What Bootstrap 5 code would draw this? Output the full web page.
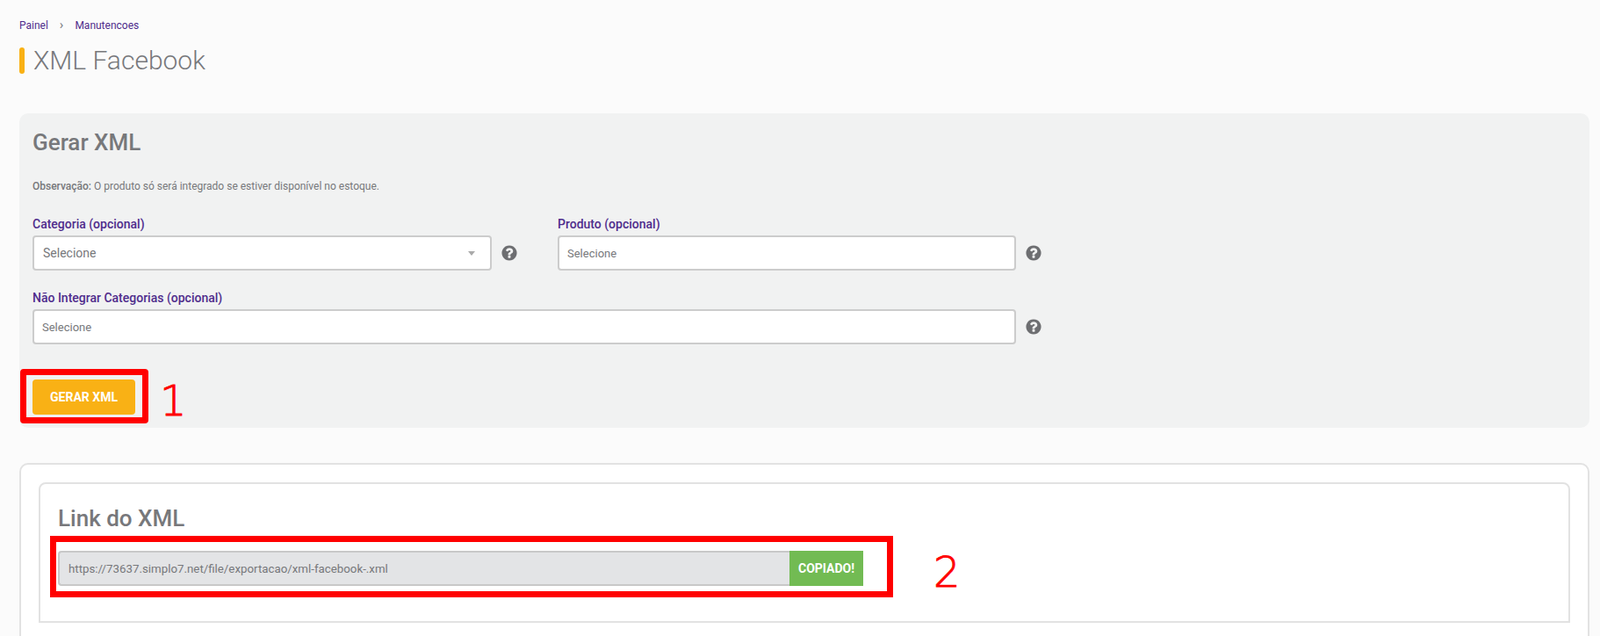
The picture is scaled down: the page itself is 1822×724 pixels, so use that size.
<!DOCTYPE html>
<html lang="pt-BR">
<head>
<meta charset="utf-8">
<title>XML Facebook</title>
<link rel="stylesheet" href="https://cdn.jsdelivr.net/npm/bootstrap@5.3.0/dist/css/bootstrap.min.css">
<style>
html,body{height:724px;overflow:hidden}
body{background:#fbfbfb;font-family:Roboto,"Liberation Sans",sans-serif;color:#77787b}
.page-wrap{padding:0 12px 0 22px}
.crumbs{--bs-breadcrumb-divider:'›';--bs-breadcrumb-margin-bottom:0;--bs-breadcrumb-item-padding-x:13px;font-size:12px;line-height:18px;padding-top:20px}
.crumbs .breadcrumb-item::before{color:#77787b;font-size:15px;line-height:16px}
.crumbs a{color:#4f2c8c;text-decoration:none}
.title-row{margin-top:16px;height:30px}
.title-mark{width:6px;height:30px;border-radius:3px;background:#f9b115;margin-right:10px}
.page-title{font-size:30px;font-weight:300;line-height:30px;margin:0;color:#77787b}
.gen-panel{background:#f1f2f2;border-radius:10px;margin-top:45px;height:358px;padding:18px 15px}
.sec-title{font-size:26px;font-weight:500;line-height:30px;margin:0;color:#77787b}
.obs-note{font-size:12px;line-height:14px;margin:28px 0 0}
.obs-note strong{font-weight:500}
.fields{margin-top:28px;width:1198px}
.fld{width:598px}
.fld-wide{width:1198px;margin-top:23px}
.fld-label{display:block;font-size:14px;font-weight:500;line-height:16px;margin:0 0 5px;color:#4f2c8c}
.fld-line{display:flex;align-items:center}
.fld-box{height:40px;border:2px solid #ccc;border-radius:4px;background-color:#fff;color:#77787b;box-shadow:none}
.fld-box.form-control{font-size:13px;padding:0 9px;width:522px}
.fld-box.form-control::placeholder{color:#77787b;opacity:1}
.fld-wide .fld-box.form-control{width:1120px}
.fld-box.form-select{font-size:14px;padding:0 10px;width:523px;background-size:8px 5px;background-position:right 17px center;background-image:url("data:image/svg+xml,%3Csvg xmlns='http://www.w3.org/2000/svg' viewBox='0 0 8 5'%3E%3Cpath d='M0 0h8L4 5z' fill='%23aaa'/%3E%3C/svg%3E")}
.help-ico{width:20px;height:20px;fill:#6d6e71;flex:none;margin-left:10px}
.gen-btn{background:#f9b115;border:0;color:#fff;font-size:14px;font-weight:700;width:117px;height:40px;border-radius:4px;margin-top:40px;padding:0;text-transform:uppercase}
.gen-wrap{position:relative;width:117px}
.red-frame{position:absolute;border:7px solid #f00;border-radius:4px;pointer-events:none}
.red-num{position:absolute;color:#f00;font-family:"DejaVu Sans",sans-serif;font-weight:200;font-size:48px;line-height:48px;-webkit-text-stroke:.9px #f00}
.frame-one{left:-14px;top:28px;width:146px;height:62px}
.num-one{left:145px;top:40px}
.result-card{background:#fff;border:2px solid #e2e2e2;border-radius:10px 10px 0 0;margin-top:40px;padding:20px 20px 0;height:260px}
.inner-card{border:2px solid #e2e2e2;border-radius:8px 8px 0 0;height:160px;padding:24px 20px 0;position:relative}
.copy-group{margin-top:22px;width:917px;position:relative}
.copy-group .form-control{height:40px;border:2px solid #c8c8c8;border-right:0;border-radius:4px 0 0 4px;background:#e3e4e6;color:#77787b;font-size:13.3px;padding:0 10px;box-shadow:none}
.copy-btn{background:#72bb53;border:0;color:#fff;font-size:14px;font-weight:700;width:84px;height:40px;padding:0;border-radius:0 4px 4px 0;text-transform:uppercase}
.frame-two{left:-8px;top:-17px;width:960px;height:70px}
.num-two{left:998px;top:0}
</style>
</head>
<body>
<main class="page-wrap">
  <nav aria-label="breadcrumb">
    <ol class="breadcrumb crumbs">
      <li class="breadcrumb-item"><a href="#">Painel</a></li>
      <li class="breadcrumb-item"><a href="#">Manutencoes</a></li>
    </ol>
  </nav>
  <div class="d-flex align-items-center title-row">
    <span class="title-mark"></span>
    <h1 class="page-title">XML Facebook</h1>
  </div>

  <section class="gen-panel">
    <h2 class="sec-title">Gerar XML</h2>
    <p class="obs-note"><strong>Observação:</strong> O produto só será integrado se estiver disponível no estoque.</p>
    <div class="d-flex fields">
      <div class="fld">
        <label class="fld-label">Categoria (opcional)</label>
        <div class="fld-line">
          <select class="form-select fld-box"><option>Selecione</option></select>
          <svg class="help-ico" viewBox="0 0 1792 1792"><path d="M1024 1376v-192q0-14-9-23t-23-9h-192q-14 0-23 9t-9 23v192q0 14 9 23t23 9h192q14 0 23-9t9-23zm256-672q0-88-55.5-163t-138.5-116-170-41q-243 0-371 213-15 24 8 42l132 100q7 6 19 6 16 0 25-12 53-68 86-92 34-24 86-24 48 0 85.5 26t37.5 59q0 38-20 61t-68 45q-63 28-115.5 86.5t-52.5 125.5v36q0 14 9 23t23 9h192q14 0 23-9t9-23q0-19 21.5-49.5t54.5-49.5q32-18 49-28.5t46-35 44.5-48 28-60.5 12.5-81zm384 192q0 209-103 385.5t-279.5 279.5-385.5 103-385.5-103-279.5-279.5-103-385.5 103-385.5 279.5-279.5 385.5-103 385.5 103 279.5 279.5 103 385.5z"/></svg>
        </div>
      </div>
      <div class="fld">
        <label class="fld-label">Produto (opcional)</label>
        <div class="fld-line">
          <input class="form-control fld-box" placeholder="Selecione">
          <svg class="help-ico" viewBox="0 0 1792 1792"><path d="M1024 1376v-192q0-14-9-23t-23-9h-192q-14 0-23 9t-9 23v192q0 14 9 23t23 9h192q14 0 23-9t9-23zm256-672q0-88-55.5-163t-138.5-116-170-41q-243 0-371 213-15 24 8 42l132 100q7 6 19 6 16 0 25-12 53-68 86-92 34-24 86-24 48 0 85.5 26t37.5 59q0 38-20 61t-68 45q-63 28-115.5 86.5t-52.5 125.5v36q0 14 9 23t23 9h192q14 0 23-9t9-23q0-19 21.5-49.5t54.5-49.5q32-18 49-28.5t46-35 44.5-48 28-60.5 12.5-81zm384 192q0 209-103 385.5t-279.5 279.5-385.5 103-385.5-103-279.5-279.5-103-385.5 103-385.5 279.5-279.5 385.5-103 385.5 103 279.5 279.5 103 385.5z"/></svg>
        </div>
      </div>
    </div>
    <div class="fld-wide">
      <label class="fld-label">Não Integrar Categorias (opcional)</label>
      <div class="fld-line">
        <input class="form-control fld-box" placeholder="Selecione">
        <svg class="help-ico" viewBox="0 0 1792 1792"><path d="M1024 1376v-192q0-14-9-23t-23-9h-192q-14 0-23 9t-9 23v192q0 14 9 23t23 9h192q14 0 23-9t9-23zm256-672q0-88-55.5-163t-138.5-116-170-41q-243 0-371 213-15 24 8 42l132 100q7 6 19 6 16 0 25-12 53-68 86-92 34-24 86-24 48 0 85.5 26t37.5 59q0 38-20 61t-68 45q-63 28-115.5 86.5t-52.5 125.5v36q0 14 9 23t23 9h192q14 0 23-9t9-23q0-19 21.5-49.5t54.5-49.5q32-18 49-28.5t46-35 44.5-48 28-60.5 12.5-81zm384 192q0 209-103 385.5t-279.5 279.5-385.5 103-385.5-103-279.5-279.5-103-385.5 103-385.5 279.5-279.5 385.5-103 385.5 103 279.5 279.5 103 385.5z"/></svg>
      </div>
    </div>
    <div class="gen-wrap">
      <button class="btn gen-btn" type="button">Gerar XML</button>
      <span class="red-frame frame-one"></span>
      <span class="red-num num-one">1</span>
    </div>
  </section>

  <section class="result-card">
    <div class="inner-card">
      <h2 class="sec-title">Link do XML</h2>
      <div class="input-group copy-group">
        <input class="form-control" readonly value="https://73637.simplo7.net/file/exportacao/xml-facebook-.xml">
        <button class="btn copy-btn" type="button">Copiado!</button>
        <span class="red-frame frame-two"></span>
        <span class="red-num num-two">2</span>
      </div>
    </div>
  </section>
</main>
<script src="https://cdn.jsdelivr.net/npm/bootstrap@5.3.0/dist/js/bootstrap.bundle.min.js"></script>
</body>
</html>
